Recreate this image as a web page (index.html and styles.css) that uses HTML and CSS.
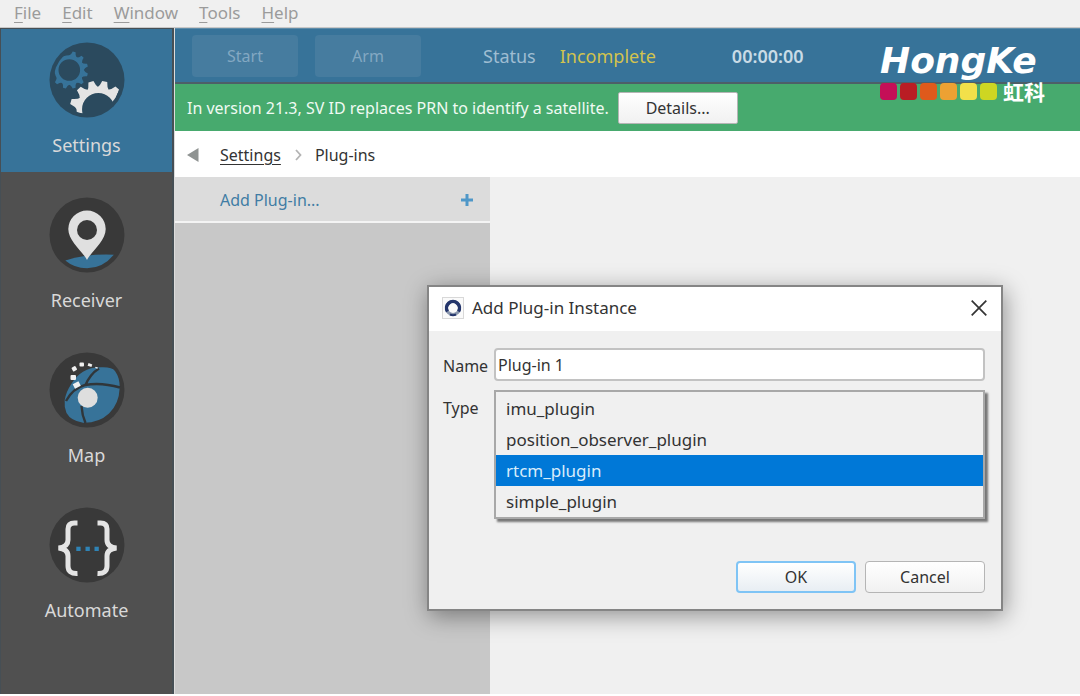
FILE: index.html
```html
<!DOCTYPE html>
<html lang="en">
<head>
<meta charset="utf-8">
<title>Add Plug-in Instance</title>
<link rel="stylesheet" href="styles.css">
</head>
<body>
<div class="app">
  <nav class="menubar" aria-label="Menu">
    <button class="menu"><u>F</u>ile</button>
    <button class="menu"><u>E</u>dit</button>
    <button class="menu"><u>W</u>indow</button>
    <button class="menu"><u>T</u>ools</button>
    <button class="menu"><u>H</u>elp</button>
  </nav>
  <div class="body">
    <nav class="sidebar" aria-label="Sections">
      <button class="tab active">
        <svg class="tab-icon" viewBox="0 0 76 76" aria-hidden="true">
          <defs>
            <clipPath id="disc"><circle cx="38" cy="38" r="33.5"/></clipPath>
            <path id="cog" d="M-4.2 -13.5 Q-1.9 -15.5 -1.5 -18.8 H1.5 Q1.9 -15.5 4.2 -13.5Z"/>
            <path id="gear" d="M-6.5 -20 Q-3.5 -23 -2.6 -28.5 H2.6 Q3.5 -23 6.5 -20Z"/>
          </defs>
          <circle cx="38" cy="38" r="37.5" fill="#2b4a5e"/>
          <g clip-path="url(#disc)">
            <g transform="translate(20.3 28)" fill="#377399">
              <circle r="12.8" fill="none" stroke="#377399" stroke-width="4"/>
              <use href="#cog" transform="rotate(15)"/><use href="#cog" transform="rotate(45)"/>
              <use href="#cog" transform="rotate(75)"/><use href="#cog" transform="rotate(105)"/>
              <use href="#cog" transform="rotate(135)"/><use href="#cog" transform="rotate(165)"/>
              <use href="#cog" transform="rotate(195)"/><use href="#cog" transform="rotate(225)"/>
            </g>
            <g transform="translate(49.3 67.3)" fill="#e4e4e4">
              <circle r="19" fill="none" stroke="#e4e4e4" stroke-width="5.5"/>
              <use href="#gear" transform="rotate(-74)"/><use href="#gear" transform="rotate(-43)"/>
              <use href="#gear" transform="rotate(-15)"/><use href="#gear" transform="rotate(13)"/>
              <use href="#gear" transform="rotate(42)"/>
            </g>
          </g>
        </svg>
        <span>Settings</span>
      </button>
      <button class="tab">
        <svg class="tab-icon" viewBox="0 0 76 76" aria-hidden="true">
          <circle cx="38" cy="38" r="37.5" fill="#393939"/>
          <path d="M16.300 63.500 Q38 56.500 64.800 57.700 Q54 71 38 71.300 Q25 71 16.300 63.500Z" fill="#377399"/>
          <path d="M38 63 C34 55 19.300 44 19.300 32 A18.700 18.500 0 0 1 56.700 32 C56.700 44 42 55 38 63Z" fill="#e0e0e0"/>
          <circle cx="38" cy="33" r="10" fill="#393939"/>
        </svg>
        <span>Receiver</span>
      </button>
      <button class="tab">
        <svg class="tab-icon" viewBox="0 0 76 76" aria-hidden="true">
          <circle cx="38" cy="38" r="37.5" fill="#393939"/>
          <path d="M34 19.700 Q42 15 53 15.300 Q63 15 66 19 Q71 26 70.700 36 Q70 52 60 61.500 Q50 71 34 70.700 Q22 69 17.500 61 Q15 55 15.700 48 Q17 40 22.300 32 Q27 24 34 19.700Z" fill="#377399"/>
          <path d="M50 16.500 Q41 22 36 34 M17 49 Q24 36 36 33 Q52 30 71 35.500 M32.500 54 Q33 63 36.500 71" fill="none" stroke="#30363a" stroke-width="2.4"/>
          <circle cx="38.7" cy="45.7" r="10" fill="#dedede"/>
          <g fill="#f0f0f0">
            <rect x="24.5" y="30.5" width="6.5" height="5" transform="rotate(-28 27.7 33)"/>
            <rect x="21.5" y="23" width="5.5" height="5" rx="1"/>
            <rect x="23" y="14.5" width="4.5" height="4.5" rx="1" transform="rotate(-30 25.3 16.7)"/>
            <rect x="30.5" y="10.5" width="4.5" height="4" rx="1"/>
            <rect x="39" y="11.7" width="4" height="2.8" transform="rotate(20 41 13)"/>
            <rect x="46.5" y="14.8" width="2.5" height="1.4" transform="rotate(20 47 15)"/>
          </g>
        </svg>
        <span>Map</span>
      </button>
      <button class="tab">
        <svg class="tab-icon" viewBox="0 0 76 76" aria-hidden="true">
          <circle cx="38" cy="38" r="37.5" fill="#393939"/>
          <g fill="none" stroke="#e4e4e4" stroke-width="5">
            <path d="M28.500 16 H25.500 Q19 16 19 22 V33 Q19 40 9.500 41 Q19 42 19 49 V59 Q19 67 28.500 66.500"/>
            <path d="M48.500 16 H51.500 Q58 16 58 22 V33 Q58 40 67.500 41 Q58 42 58 49 V59 Q58 67 48.500 66.500"/>
          </g>
          <g fill="#2f83b5"><rect x="27.3" y="39.7" width="4.3" height="4.3"/><rect x="36.5" y="39.7" width="4.3" height="4.3"/><rect x="45.5" y="39.7" width="4.3" height="4.3"/></g>
        </svg>
        <span>Automate</span>
      </button>
    </nav>
    <main class="main">
      <header class="toolbar">
        <button class="tool" disabled>Start</button>
        <button class="tool" disabled>Arm</button>
        <span class="status-label">Status</span>
        <span class="status">Incomplete</span>
        <time class="clock">00:00:00</time>
      </header>
      <div class="notice">
        <span>In version 21.3, SV ID replaces PRN to identify a satellite.</span>
        <button class="btn details">Details...</button>
      </div>
      <nav class="crumbs" aria-label="Breadcrumb">
        <button class="back" aria-label="Back"><svg width="12" height="14" viewBox="0 0 12 14"><path d="M0 7 11.500 0V14Z" fill="#8f9392"/></svg></button>
        <a class="crumb" href="#">Settings</a>
        <svg class="sep" width="7" height="12" viewBox="0 0 7 12" aria-hidden="true"><path d="M1 1 5.500 6 1 11" fill="none" stroke="#b4b4b4" stroke-width="1.8"/></svg>
        <span>Plug-ins</span>
      </nav>
      <div class="content">
        <aside class="panel">
          <button class="add"><span>Add Plug-in...</span>
            <svg width="12" height="12" viewBox="0 0 12 12" aria-hidden="true"><path d="M6 0V12M0 6H12" stroke="#4f97c8" stroke-width="3"/></svg>
          </button>
        </aside>
      </div>
    </main>
  </div>
  <div class="logo">
    <div class="logo-name">HongKe</div>
    <div class="logo-row">
      <i class="chip c1"></i><i class="chip c2"></i><i class="chip c3"></i><i class="chip c4"></i><i class="chip c5"></i><i class="chip c6"></i>
      <span class="logo-cn" lang="zh">虹科</span>
    </div>
  </div>
  <section class="dialog" role="dialog" aria-labelledby="dialog-title">
    <header class="dialog-head">
      <svg width="22" height="22" viewBox="0 0 22 22" aria-hidden="true"><rect x=".5" y=".5" width="21" height="21" fill="#fafafa" stroke="#d8d8d8"/><circle cx="11" cy="11" r="6.5" fill="none" stroke="#8b97ad" stroke-width="3"/><path d="M5.500 14.500A6.500 6.500 0 1 1 16.500 14.500" fill="none" stroke="#24356b" stroke-width="3.4"/><path d="M8 17.500A7 7 0 0 0 14 17.500" fill="none" stroke="#24356b" stroke-width="2"/></svg>
      <h1 class="dialog-title" id="dialog-title">Add Plug-in Instance</h1>
      <button class="close" aria-label="Close"><svg width="16" height="16" viewBox="0 0 16 16"><path d="M.7 .7 15.300 15.300M15.300 .7 .7 15.300" stroke="#333" stroke-width="1.7"/></svg></button>
    </header>
    <form class="form">
      <label class="label" for="name">Name</label>
      <input class="text" id="name" type="text" value="Plug-in 1">
      <label class="label" for="type">Type</label>
      <select class="list" id="type" size="4">
        <option>imu_plugin</option>
        <option>position_observer_plugin</option>
        <option selected>rtcm_plugin</option>
        <option>simple_plugin</option>
      </select>
    </form>
    <footer class="actions">
      <button class="btn primary">OK</button>
      <button class="btn">Cancel</button>
    </footer>
  </section>
</div>
</body>
</html>
```
FILE: styles.css
```css
* { box-sizing: border-box; }
body { margin: 0; font: 16px/24px "Noto Sans", "Open Sans", sans-serif; color: #333; background: #fff; }
button, input, select { font: inherit; color: inherit; margin: 0; }
button { padding: 0; border: 0; background: none; }
svg { display: block; flex: none; }

.app { position: relative; display: flex; flex-direction: column; min-height: 100vh; padding-bottom: 2px; }
.menubar { display: flex; gap: 21px; height: 28px; padding: 0 14px 1px; background: #f0f0f0; border-bottom: 1px solid #c8c8c8; font-size: 17px; }
.menu { color: #9b9b9b; }
.menu u { text-underline-offset: 3px; }

.body { flex: 1; display: flex; }
.sidebar { flex: none; display: flex; flex-direction: column; gap: 12px; width: 174px; background: #505050; border: 1px solid #464f55; border-width: 1px 2px 0 1px; }
.tab { display: flex; flex-direction: column; align-items: center; justify-content: flex-start; gap: 15px; height: 143px; padding-top: 13px; font-size: 18px; color: #d9d9d9; }
.tab.active { background: #377399; }
.tab-icon { width: 76px; height: 76px; }

.main { flex: 1; min-width: 0; display: flex; flex-direction: column; border-left: 1px solid #dcdcdc; }
.toolbar { display: flex; align-items: center; height: 56px; padding-left: 17px; background: #377399; border-top: 1px solid #5f8ca9; border-bottom: 2px solid #4d5f68; color: #9fbdd2; font-size: 18px; }
.tool { width: 106px; height: 42px; margin-right: 17px; border-radius: 4px; background: #467c9f; color: #83a8c2; font-size: 16px; }
.status-label { margin-left: 45px; }
.status { margin-left: 24px; color: #d3c34e; }
.clock { margin-left: 76px; color: #c9dbe6; font-weight: 600; }

.notice { display: flex; align-items: center; gap: 9px; height: 47px; padding-left: 12px; background: #47aa6e; color: #f0faf3; }
.btn { width: 120px; height: 32px; border: 1px solid #b5b5b5; border-radius: 4px; background: linear-gradient(#fff, #f1f1f1); color: #333; }
.details { border-radius: 2px; }

.crumbs { display: flex; align-items: center; height: 46px; padding: 2px 0 0 12px; background: #fff; }
.back { margin-right: 21px; }
.crumb { color: inherit; text-underline-offset: 3px; }
.sep { margin: 0 13px 0 14px; }

.content { flex: 1; display: flex; background: #f0f0f0; }
.panel { width: 315px; background: #c8c8c8; }
.add { display: flex; align-items: center; justify-content: space-between; width: 100%; height: 46px; padding: 1px 17px 0 45px; background: #dcdcdc; border-bottom: 2px solid #f4f4f4; color: #417ca4; }

.logo { position: absolute; top: 43px; right: 35px; color: #fff; }
.logo-name { font: italic bold 36px/36px "DejaVu Sans", sans-serif; }
.logo-row { display: flex; align-items: center; gap: 3px; height: 24px; }
.chip { width: 17px; height: 17px; border-radius: 4px; }
.c1 { background: #c40f57; }
.c2 { background: #b91d24; }
.c3 { background: #df5a1c; }
.c4 { background: #eda133; }
.c5 { background: #f2e04a; }
.c6 { background: #ced622; }
.logo-cn { margin-left: 3px; font: bold 21px/22px "Noto Sans CJK SC", sans-serif; }

.dialog { position: absolute; left: 427px; top: 285px; width: 576px; background: #f0f0f0; border: 2px solid #858585; box-shadow: 2px 5px 22px rgba(0, 0, 0, .4); }
.dialog-head { display: flex; align-items: center; gap: 8px; height: 44px; padding: 0 14px 2px 13px; background: #fff; }
.dialog-title { flex: 1; margin: 0; font-size: 17px; font-weight: 400; }
.form { display: grid; grid-template-columns: 43px 1fr; column-gap: 8px; row-gap: 9px; padding: 17px 16px 0 14px; }
.label { line-height: 36px; height: 33px; }
.text { width: 100%; height: 33px; padding: 0 2px; border: 2px solid #c2c2c2; border-radius: 4px; background: #fff; }
.list { width: 100%; height: 129px; padding: 1px 0; overflow: hidden; border: 2px solid #a8a8a8; border-radius: 0; outline: 0; background: #f0f0f0; box-shadow: 3px 3px 2px #777; }
.list option { height: 31px; min-height: 31px; padding: 4px 10px 0; font-size: 17px; color: #333; }
.list option:checked { background: #0078d7 linear-gradient(#0078d7, #0078d7); color: #d8ecfb; -webkit-text-fill-color: #d8ecfb; }
.actions { display: flex; justify-content: flex-end; gap: 9px; padding: 42px 16px 16px; }
.primary { border: 2px solid #7fc4f5; background: linear-gradient(#fff, #e8eef3); }
```
